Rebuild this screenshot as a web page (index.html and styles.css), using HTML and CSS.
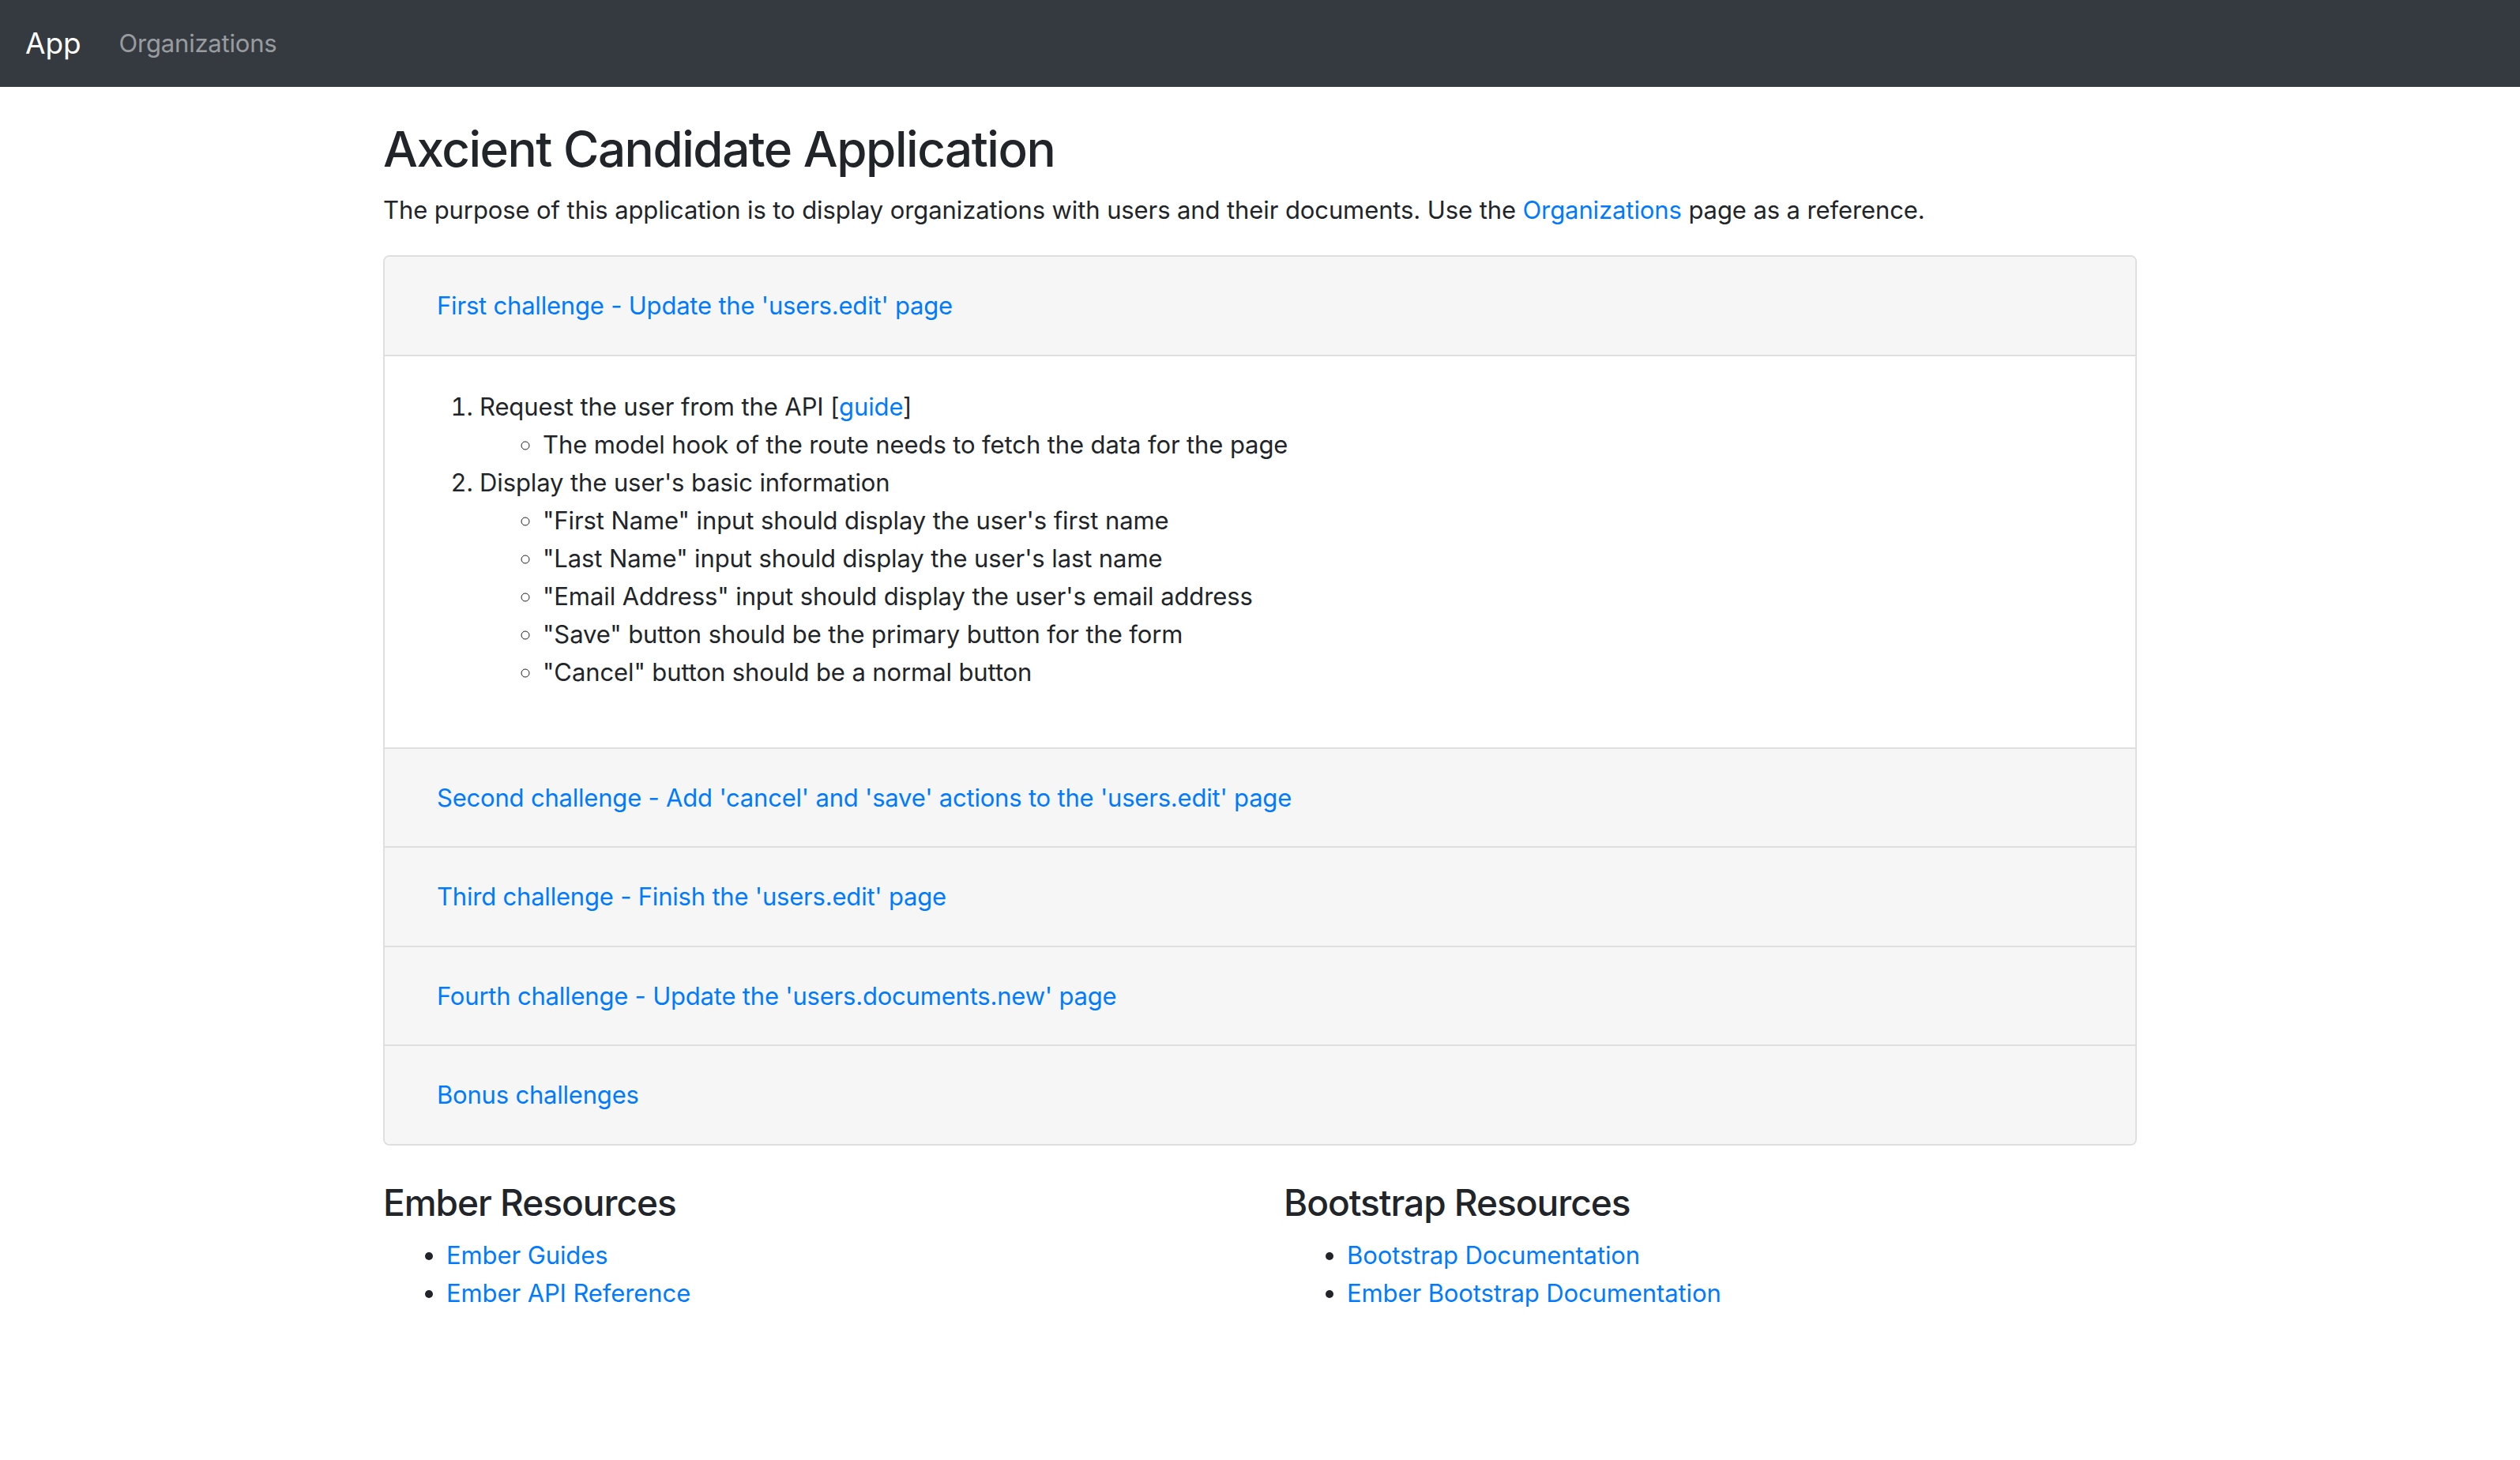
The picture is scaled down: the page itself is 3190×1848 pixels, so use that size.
FILE: index.html
```html
<!DOCTYPE html>
<html lang="en">
<head>
<meta charset="utf-8">
<title>Axcient Candidate Application</title>
<link rel="stylesheet" href="styles.css">
</head>
<body>
<nav class="navbar">
  <a class="brand" href="#">App</a>
  <a class="nav-link" href="#">Organizations</a>
</nav>
<main class="container">
  <h1 class="title">Axcient Candidate Application</h1>
  <p class="lead-text">The purpose of this application is to display organizations with users and their documents. Use the <a href="#">Organizations</a> page as a reference.</p>

  <div class="accordion">
    <section class="acc-item">
      <div class="acc-header"><a class="acc-toggle" href="#">First challenge - Update the 'users.edit' page</a></div>
      <div class="acc-body">
        <ol class="steps">
          <li>Request the user from the API [<a href="#">guide</a>]
            <ul class="sub">
              <li>The model hook of the route needs to fetch the data for the page</li>
            </ul>
          </li>
          <li>Display the user's basic information
            <ul class="sub">
              <li>"First Name" input should display the user's first name</li>
              <li>"Last Name" input should display the user's last name</li>
              <li>"Email Address" input should display the user's email address</li>
              <li>"Save" button should be the primary button for the form</li>
              <li>"Cancel" button should be a normal button</li>
            </ul>
          </li>
        </ol>
      </div>
    </section>
    <section class="acc-item">
      <div class="acc-header"><a class="acc-toggle" href="#">Second challenge - Add 'cancel' and 'save' actions to the 'users.edit' page</a></div>
    </section>
    <section class="acc-item">
      <div class="acc-header"><a class="acc-toggle" href="#">Third challenge - Finish the 'users.edit' page</a></div>
    </section>
    <section class="acc-item">
      <div class="acc-header"><a class="acc-toggle" href="#">Fourth challenge - Update the 'users.documents.new' page</a></div>
    </section>
    <section class="acc-item">
      <div class="acc-header"><a class="acc-toggle" href="#">Bonus challenges</a></div>
    </section>
  </div>

  <div class="resources">
    <div class="res-col">
      <h3 class="res-title">Ember Resources</h3>
      <ul class="res-list">
        <li><a href="#">Ember Guides</a></li>
        <li><a href="#">Ember API Reference</a></li>
      </ul>
    </div>
    <div class="res-col">
      <h3 class="res-title">Bootstrap Resources</h3>
      <ul class="res-list">
        <li><a href="#">Bootstrap Documentation</a></li>
        <li><a href="#">Ember Bootstrap Documentation</a></li>
      </ul>
    </div>
  </div>
</main>
</body>
</html>
```

FILE: styles.css
```css
* { box-sizing: border-box; }

html, body {
  margin: 0;
  padding: 0;
  background: #fff;
}

body {
  font-family: Inter, "Noto Sans", "Liberation Sans", sans-serif;
  font-size: 31px;
  letter-spacing: -0.1px;
  line-height: 48px;
  color: #212529;
}

a {
  color: #007bff;
  text-decoration: none;
}

.navbar {
  display: flex;
  align-items: center;
  background: #343a40;
  padding: 15px 32px;
}

.brand {
  color: #fff;
  font-size: 37px;
  line-height: 60px;
  padding: 10px 0;
  margin-right: 32px;
}

.nav-link {
  color: rgba(255, 255, 255, 0.5);
  font-size: 31px;
  letter-spacing: -0.2px;
  line-height: 48px;
  padding: 16px;
}

.container {
  width: 2220px;
  margin: 0 auto;
  padding-top: 39px;
}

.title {
  font-size: 62px;
  font-weight: 500;
  letter-spacing: -1.5px;
  line-height: 79px;
  margin: 0 0 14px;
}

.lead-text {
  margin: 0 0 33px;
}

.accordion {
  border: 2px solid #dfdfdf;
  border-radius: 8px;
  overflow: hidden;
}

.acc-item + .acc-item {
  border-top: 2px solid #dfdfdf;
}

.acc-header {
  background: #f6f6f6;
  padding: 24px 40px 23.5px;
}

.acc-body {
  border-top: 2px solid #dfdfdf;
  padding: 40px 40px 39px;
  background: #fff;
}

.acc-toggle {
  display: inline-block;
  padding: 12px 24px;
  border: 2px solid transparent;
  line-height: 48px;
  letter-spacing: -0.2px;
}

.steps {
  margin: 0 0 32px;
  padding-left: 80px;
}

.sub {
  margin: 0;
  padding-left: 80px;
  list-style-type: circle;
}

.resources {
  display: grid;
  grid-template-columns: 1fr 1fr;
  column-gap: 60px;
  margin-top: 43px;
}

.res-title {
  font-size: 46px;
  font-weight: 500;
  letter-spacing: -1px;
  line-height: 58px;
  margin: 0 0 14px;
}

.res-list {
  margin: 0 0 32px;
  padding-left: 80px;
}
```
